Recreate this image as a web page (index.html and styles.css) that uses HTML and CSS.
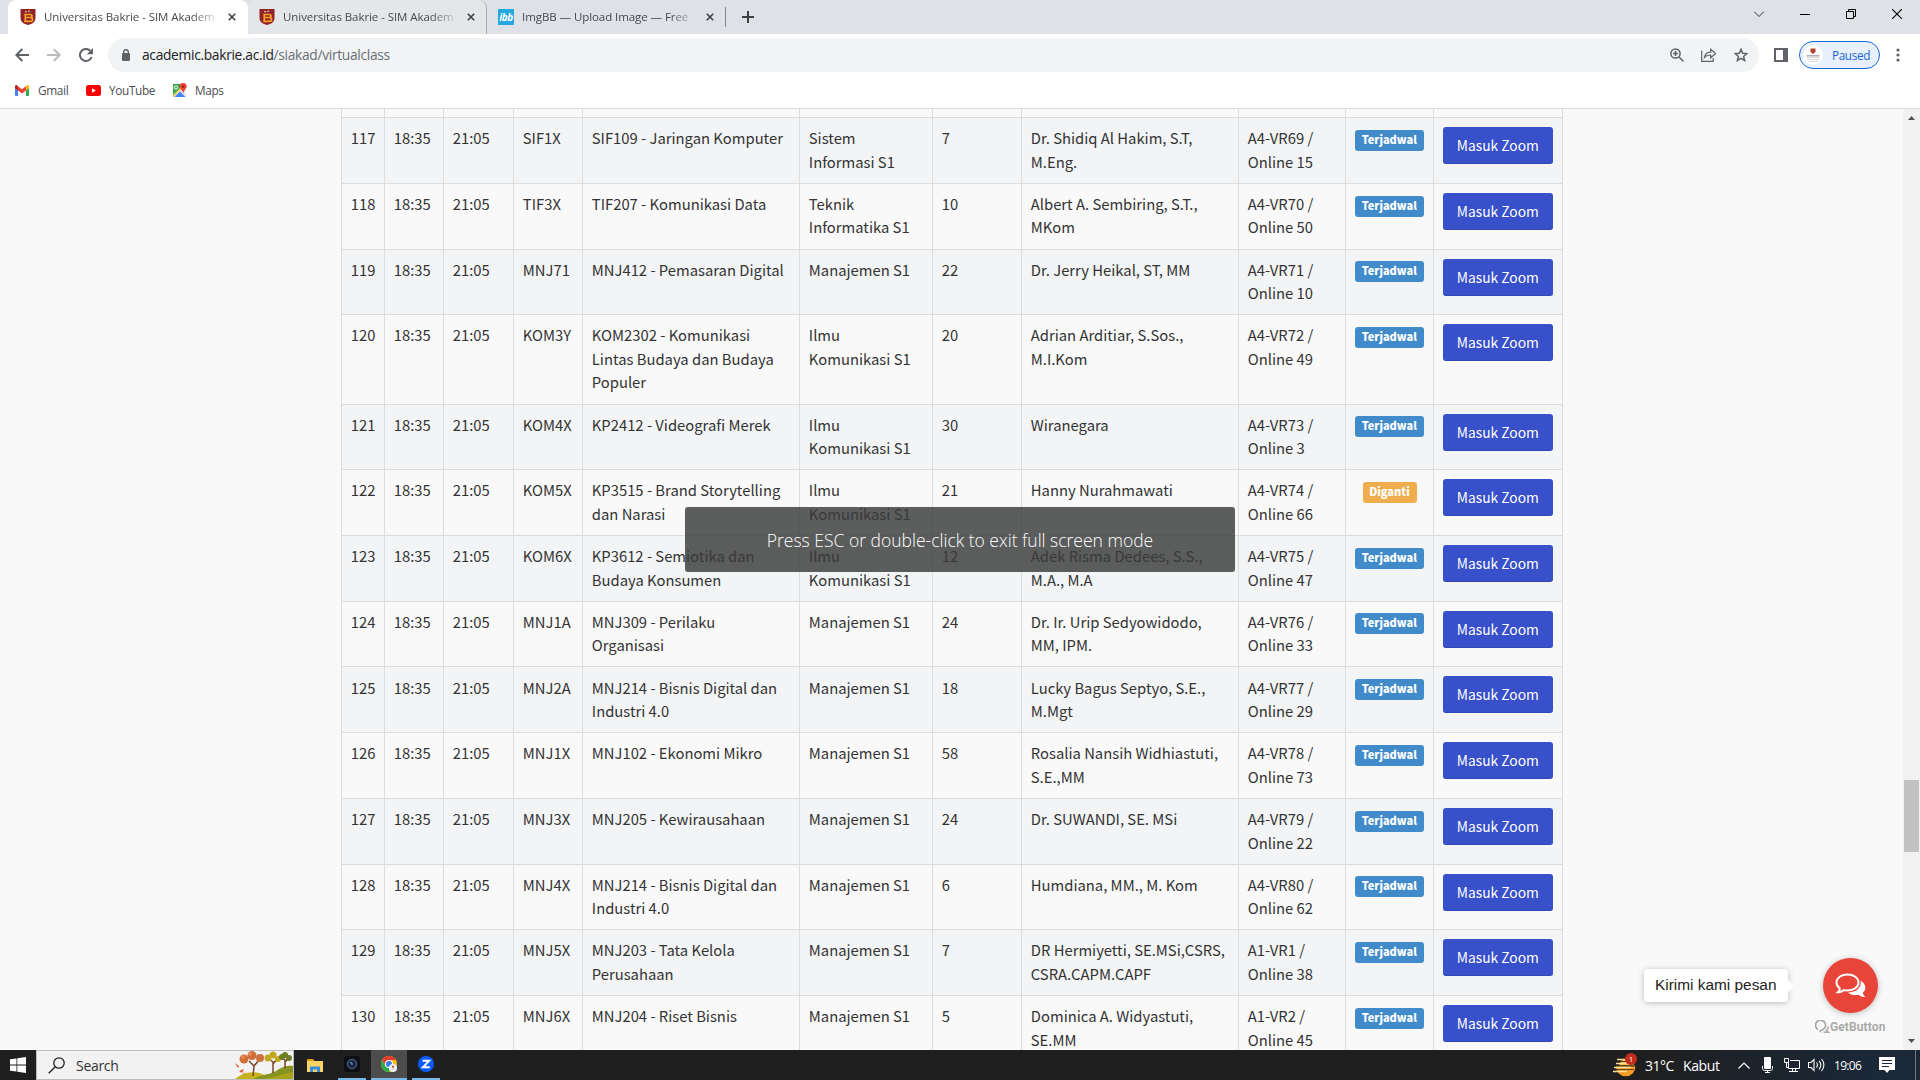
FILE: index.html
```html
<!DOCTYPE html>
<html lang="id">
<head>
    <meta charset="UTF-8">
    <meta name="viewport" content="width=device-width, initial-scale=1.0">
    <title>Universitas Bakrie - SIM Akademik</title>
    <link rel="stylesheet" href="styles.css">
</head>
<body>
  <!-- shared icons -->
  <svg class="defs" width="0" height="0">
    <symbol id="shield" viewBox="0 0 16 16">
      <path d="M0.5 0h15v9c0 4-3.500 6-7.500 7C4 15 0.500 13 0.500 9z" fill="#8f2326"/>
      <path d="M4.200 5.500h6c2.400 0 2.400 3 0 3h-4M4.200 12.300h6.300c2.800 0 2.800-3.800 0-3.800M5.300 5.500v6.800" fill="none" stroke="#f5a12c" stroke-width="1.700"/>
      <path d="M5 3.200l1-.9 1 .9M8 2.800l1.200-1 1 1" fill="none" stroke="#f6d9b0" stroke-width="1"/>
    </symbol>
    <symbol id="close" viewBox="0 0 8 8">
      <path d="M0.800 0.800l6.400 6.400M7.200 0.800l-6.400 6.400" stroke="#3c4043" stroke-width="1.600" fill="none"/>
    </symbol>
  </svg>

  <header class="browser">
    <div class="tabs">
      <div class="tab active">
        <svg class="favicon" width="16" height="16"><use href="#shield"/></svg>
        <span class="tab-title">Universitas Bakrie - SIM Akadem</span>
        <svg class="tab-close" width="8" height="8"><use href="#close"/></svg>
      </div>
      <div class="tab hover">
        <svg class="favicon" width="16" height="16"><use href="#shield"/></svg>
        <span class="tab-title">Universitas Bakrie - SIM Akadem</span>
        <svg class="tab-close" width="8" height="8"><use href="#close"/></svg>
      </div>
      <div class="tab last">
        <span class="favicon ibb">ibb</span>
        <span class="tab-title">ImgBB — Upload Image — Free</span>
        <svg class="tab-close" width="8" height="8"><use href="#close"/></svg>
      </div>
      <svg class="new-tab" width="12" height="12" viewBox="0 0 12 12"><path d="M6 0v12M0 6h12" stroke="#3c4043" stroke-width="2"/></svg>
      <div class="window-buttons">
        <svg width="10" height="10" viewBox="0 0 10 10"><path d="M0 2.500l5 5 5-5" fill="none" stroke="#333"/></svg>
        <svg width="10" height="10" viewBox="0 0 10 10"><path d="M0 5.500h10" stroke="#000"/></svg>
        <svg width="10" height="10" viewBox="0 0 10 10"><path d="M.5 2.500h7v7h-7zM2.500 2.500v-2h7v7h-2" fill="none" stroke="#000"/></svg>
        <svg width="10" height="10" viewBox="0 0 10 10"><path d="M0 0l10 10M10 0L0 10" stroke="#000" stroke-width="1.100"/></svg>
      </div>
    </div>

    <div class="toolbar">
      <div class="nav">
        <svg width="14" height="14" viewBox="0 0 14 14"><path d="M14 7H1.500M7.300 1L1.300 7l6 6" fill="none" stroke="#5f6368" stroke-width="2"/></svg>
        <svg width="14" height="14" viewBox="0 0 14 14"><path d="M0 7h12.500M6.700 1l6 6-6 6" fill="none" stroke="#babcbe" stroke-width="2"/></svg>
        <svg width="14" height="14" viewBox="0 0 14 14"><path d="M12.600 9A6 6 0 1 1 11.300 2.800" fill="none" stroke="#5f6368" stroke-width="2"/><path d="M14 0v6.200H7.800z" fill="#5f6368"/></svg>
      </div>
      <div class="address">
        <svg width="8" height="12" viewBox="0 0 8 12"><path d="M1.700 5V3a2.300 2.300 0 0 1 4.600 0v2" fill="none" stroke="#5f6368" stroke-width="1.400"/><rect y="4" width="8" height="8" rx="1" fill="#5f6368"/></svg>
        <span class="url">academic.bakrie.ac.id<span>/siakad/virtualclass</span></span>
        <div class="address-icons">
          <svg width="14" height="14" viewBox="0 0 14 14"><g fill="none" stroke="#5f6368" stroke-width="1.500"><circle cx="5.500" cy="5.500" r="4.600"/><path d="M8.800 8.800l4.700 4.700M3 5.500h5M5.500 3v5"/></g></svg>
          <svg width="16" height="14" viewBox="0 0 16 14"><g fill="none" stroke="#5f6368" stroke-width="1.200"><path d="M.7 2.500v10.800h11.500V10"/><path d="M3.500 9.500c.5-3.500 3-5.300 6.200-5.300V1.200L14.500 5.500 9.700 9.800V7c-3 0-4.700.6-6.200 2.500z"/></g></svg>
          <svg width="14" height="14" viewBox="0 0 14 14"><path d="M7 1.300l1.600 4 4.200.3-3.200 2.800 1 4.100L7 10.300l-3.600 2.200 1-4.100L1.200 5.600l4.200-.3z" fill="none" stroke="#5f6368" stroke-width="1.500"/></svg>
        </div>
      </div>
      <svg class="side-panel" width="14" height="14" viewBox="0 0 14 14"><path d="M0 0h14v14H0zM2 2v10h7V2z" fill="#5f6368" fill-rule="evenodd"/></svg>
      <div class="profile">
        <span class="avatar">
          <svg width="20" height="20" viewBox="0 0 20 20"><path d="M7.500 3.500h5v3.500l-2.500 2-2.500-2z" fill="#b5432a"/><path d="M3.500 10.500h13M3.500 12h13" stroke="#aaa" stroke-width=".9"/><path d="M4 14.500h12M6 16.500h8" stroke="#ccc" stroke-width=".8"/></svg>
        </span>
        <span class="paused">Paused</span>
      </div>
      <svg class="menu" width="4" height="14" viewBox="0 0 4 14" fill="#5f6368"><circle cx="2" cy="2" r="1.600"/><circle cx="2" cy="7" r="1.600"/><circle cx="2" cy="12" r="1.600"/></svg>
    </div>

    <div class="bookmarks">
      <a class="gmail">
        <svg width="14" height="11" viewBox="0 0 14 11"><path d="M0 2v8.200c0 .5.300.8.800.8H3V4z" fill="#4285f4"/><path d="M14 2v8.200c0 .5-.3.800-.8.800H11V4z" fill="#34a853"/><path d="M11 1.200V5.500l3-2.300V1.500c0-1.300-1.300-1.900-2.300-1.100z" fill="#fbbc04"/><path d="M0 1.500v1.700l3 2.300V1.200L2.300.4C1.300-.4 0 .2 0 1.500z" fill="#c5221f"/><path d="M3 1.200v4.300l4 3 4-3V1.200l-4 3z" fill="#ea4335"/></svg>
        <span>Gmail</span>
      </a>
      <a class="youtube">
        <svg width="15" height="11" viewBox="0 0 15 11"><rect width="15" height="11" rx="2.500" fill="#f00"/><path d="M6 3.200v4.600l4-2.300z" fill="#fff"/></svg>
        <span>YouTube</span>
      </a>
      <a class="maps">
        <svg width="15" height="15" viewBox="0 0 15 15"><path d="M1 1h13v13H1z" fill="#34a853"/><path d="M1 14L14 1v13z" fill="#e8eaed"/><path d="M2.500 14L8 8.500l5.500 5.500z" fill="#4285f4"/><path d="M1 14v-2l10-10h2z" fill="#fbd14b"/><circle cx="4" cy="4.500" r="1.600" fill="none" stroke="#fff"/><path d="M11 0a3.600 3.600 0 0 1 3.700 3.600C14.700 6 11.500 7 11.200 11c-.3-4-3.700-5-3.700-7.400A3.600 3.600 0 0 1 11 0z" fill="#ea4335"/><circle cx="11.100" cy="3.600" r="1.200" fill="#96190f"/></svg>
        <span>Maps</span>
      </a>
    </div>
  </header>

  <main class="page">
    <table class="schedule">
      <colgroup>
        <col class="c-no"><col class="c-start"><col class="c-end"><col class="c-class"><col class="c-course"><col class="c-prodi"><col class="c-total"><col class="c-lecturer"><col class="c-room"><col class="c-status"><col class="c-action">
      </colgroup>
      <tbody>
        <tr class="previous"><td></td><td></td><td></td><td></td><td></td><td></td><td></td><td></td><td></td><td></td><td></td></tr>
        <tr><td>117</td><td>18:35</td><td>21:05</td><td>SIF1X</td><td>SIF109 - Jaringan Komputer</td><td>Sistem Informasi S1</td><td>7</td><td>Dr. Shidiq Al Hakim, S.T, M.Eng.</td><td>A4-VR69 / Online 15</td><td><span class="label">Terjadwal</span></td><td><a class="btn">Masuk Zoom</a></td></tr>
        <tr><td>118</td><td>18:35</td><td>21:05</td><td>TIF3X</td><td>TIF207 - Komunikasi Data</td><td>Teknik Informatika S1</td><td>10</td><td>Albert A. Sembiring, S.T., MKom</td><td>A4-VR70 / Online 50</td><td><span class="label">Terjadwal</span></td><td><a class="btn">Masuk Zoom</a></td></tr>
        <tr><td>119</td><td>18:35</td><td>21:05</td><td>MNJ71</td><td>MNJ412 - Pemasaran Digital</td><td>Manajemen S1</td><td>22</td><td>Dr. Jerry Heikal, ST, MM</td><td>A4-VR71 / Online 10</td><td><span class="label">Terjadwal</span></td><td><a class="btn">Masuk Zoom</a></td></tr>
        <tr><td>120</td><td>18:35</td><td>21:05</td><td>KOM3Y</td><td>KOM2302 - Komunikasi Lintas Budaya dan Budaya Populer</td><td>Ilmu Komunikasi S1</td><td>20</td><td>Adrian Arditiar, S.Sos., M.I.Kom</td><td>A4-VR72 / Online 49</td><td><span class="label">Terjadwal</span></td><td><a class="btn">Masuk Zoom</a></td></tr>
        <tr><td>121</td><td>18:35</td><td>21:05</td><td>KOM4X</td><td>KP2412 - Videografi Merek</td><td>Ilmu Komunikasi S1</td><td>30</td><td>Wiranegara</td><td>A4-VR73 / Online 3</td><td><span class="label">Terjadwal</span></td><td><a class="btn">Masuk Zoom</a></td></tr>
        <tr><td>122</td><td>18:35</td><td>21:05</td><td>KOM5X</td><td>KP3515 - Brand Storytelling dan Narasi</td><td>Ilmu Komunikasi S1</td><td>21</td><td>Hanny Nurahmawati</td><td>A4-VR74 / Online 66</td><td><span class="label warning">Diganti</span></td><td><a class="btn">Masuk Zoom</a></td></tr>
        <tr><td>123</td><td>18:35</td><td>21:05</td><td>KOM6X</td><td>KP3612 - Semiotika dan Budaya Konsumen</td><td>Ilmu Komunikasi S1</td><td>12</td><td>Adek Risma Dedees, S.S., M.A., M.A</td><td>A4-VR75 / Online 47</td><td><span class="label">Terjadwal</span></td><td><a class="btn">Masuk Zoom</a></td></tr>
        <tr><td>124</td><td>18:35</td><td>21:05</td><td>MNJ1A</td><td>MNJ309 - Perilaku Organisasi</td><td>Manajemen S1</td><td>24</td><td>Dr. Ir. Urip Sedyowidodo, MM, IPM.</td><td>A4-VR76 / Online 33</td><td><span class="label">Terjadwal</span></td><td><a class="btn">Masuk Zoom</a></td></tr>
        <tr><td>125</td><td>18:35</td><td>21:05</td><td>MNJ2A</td><td>MNJ214 - Bisnis Digital dan Industri 4.0</td><td>Manajemen S1</td><td>18</td><td>Lucky Bagus Septyo, S.E., M.Mgt</td><td>A4-VR77 / Online 29</td><td><span class="label">Terjadwal</span></td><td><a class="btn">Masuk Zoom</a></td></tr>
        <tr><td>126</td><td>18:35</td><td>21:05</td><td>MNJ1X</td><td>MNJ102 - Ekonomi Mikro</td><td>Manajemen S1</td><td>58</td><td>Rosalia Nansih Widhiastuti, S.E.,MM</td><td>A4-VR78 / Online 73</td><td><span class="label">Terjadwal</span></td><td><a class="btn">Masuk Zoom</a></td></tr>
        <tr><td>127</td><td>18:35</td><td>21:05</td><td>MNJ3X</td><td>MNJ205 - Kewirausahaan</td><td>Manajemen S1</td><td>24</td><td>Dr. SUWANDI, SE. MSi</td><td>A4-VR79 / Online 22</td><td><span class="label">Terjadwal</span></td><td><a class="btn">Masuk Zoom</a></td></tr>
        <tr><td>128</td><td>18:35</td><td>21:05</td><td>MNJ4X</td><td>MNJ214 - Bisnis Digital dan Industri 4.0</td><td>Manajemen S1</td><td>6</td><td>Humdiana, MM., M. Kom</td><td>A4-VR80 / Online 62</td><td><span class="label">Terjadwal</span></td><td><a class="btn">Masuk Zoom</a></td></tr>
        <tr><td>129</td><td>18:35</td><td>21:05</td><td>MNJ5X</td><td>MNJ203 - Tata Kelola Perusahaan</td><td>Manajemen S1</td><td>7</td><td>DR Hermiyetti, SE.MSi,CSRS, CSRA.CAPM.CAPF</td><td>A1-VR1 / Online 38</td><td><span class="label">Terjadwal</span></td><td><a class="btn">Masuk Zoom</a></td></tr>
        <tr><td>130</td><td>18:35</td><td>21:05</td><td>MNJ6X</td><td>MNJ204 - Riset Bisnis</td><td>Manajemen S1</td><td>5</td><td>Dominica A. Widyastuti, SE.MM</td><td>A1-VR2 / Online 45</td><td><span class="label">Terjadwal</span></td><td><a class="btn">Masuk Zoom</a></td></tr>
      </tbody>
    </table>

    <div class="scrollbar">
      <svg width="7" height="4" viewBox="0 0 7 4"><path d="M0 4L3.500 0 7 4z" fill="#505050"/></svg>
      <div class="track"><div class="thumb"></div></div>
      <svg width="7" height="4" viewBox="0 0 7 4"><path d="M0 0L3.500 4 7 0z" fill="#505050"/></svg>
    </div>

    <div class="chat">
      <div class="bubble">Kirimi kami pesan</div>
      <div class="chat-side">
        <div class="chat-button">
          <svg width="32" height="26" viewBox="0 0 32 26"><path d="M25.500 7.500c6 3.500 6 9.500 2.300 12.300.2 1.800 1.200 3 2.500 4.300-2.800.1-4.800-.9-6.500-2.400-4 .8-8 .2-10.800-2.300 8.500 0 14-5 12.500-11.900z" fill="#fff"/><path d="M12.500 1.500c6.200 0 11 3.400 11 8s-4.800 8-11 8c-1.300 0-2.500-.1-3.600-.4C7.300 18.300 5.200 19.200 3 19.200c1.100-1 1.700-2.200 1.800-3.800-2-1.500-3.300-3.600-3.300-5.900 0-4.600 4.800-8 11-8z" fill="#e8443a" stroke="#fff" stroke-width="2"/></svg>
        </div>
        <div class="getbutton">
          <svg width="15" height="13" viewBox="0 0 15 13"><path d="M3 9.500a5 5 0 1 1 3.500.6L4.500 11.800" fill="none" stroke="#a9a9a9" stroke-width="1.800"/><path d="M12.800 6.500c.4 1.800-.1 3.200-1.300 4l2 1.700H8.500" fill="none" stroke="#a9a9a9" stroke-width="1.600"/></svg>
          <span>GetButton</span>
        </div>
      </div>
    </div>
  </main>

  <div class="esc-message">Press ESC or double-click to exit full screen mode</div>

  <footer class="taskbar">
    <div class="start">
      <svg width="16" height="16" viewBox="0 0 16 16"><path d="M0 2.300L6.500 1.400v6.200H0zM7.300 1.300L16 0v7.600H7.300zM0 8.400h6.500v6.200L0 13.700zM7.300 8.400H16V16l-8.700-1.300z" fill="#fff"/></svg>
    </div>
    <div class="search">
      <svg width="17" height="17" viewBox="0 0 17 17"><circle cx="11" cy="6" r="5.200" fill="none" stroke="#222" stroke-width="1.300"/><path d="M7.300 9.700L.7 16.300" stroke="#222" stroke-width="1.400"/></svg>
      <span>Search</span>
      <svg class="trees" width="58" height="28" viewBox="0 0 58 28">
        <path d="M0 28C8 21 18 19 30 24l4 4z" fill="#c7b21c"/>
        <path d="M18 28c10-5 18-4 26-10 5-3 10-4 14-3v13z" fill="#86931f"/>
        <path d="M26 28c12-1 20-5 32-7v7z" fill="#a9a31c"/>
        <path d="M18 25l1-10-5-5M19 15l5-6M38 22V11l-4-3M38 13l4-5M50 17v-8l-3-2M50 11l3-3" fill="none" stroke="#7b4426" stroke-width="1.500"/>
        <g fill="#cf6f3c"><circle cx="9" cy="8" r="4.500"/><circle cx="17" cy="4.500" r="4.500"/><circle cx="25" cy="7" r="4"/></g>
        <g fill="#e08a4d"><circle cx="15" cy="3" r="2"/><circle cx="8" cy="6" r="2"/></g>
        <g fill="#c2a81f"><circle cx="33" cy="7" r="3.500"/><circle cx="38" cy="4" r="3.500"/><circle cx="43" cy="8" r="3"/></g>
        <g fill="#6f7d27"><circle cx="47" cy="6" r="3"/><circle cx="50" cy="4" r="3"/><circle cx="54" cy="7" r="3"/></g>
        <path d="M0 12l4 3-1 2zM4 20l5-2-2 4zM8 23l2-2-1 3z" fill="#e2572b"/>
      </svg>
    </div>
    <div class="task folder">
      <svg width="16" height="15" viewBox="0 0 16 15"><path d="M0 1h6l1.500 2H0z" fill="#e39a0c"/><path d="M0 3h16v11H0z" fill="#fdd366"/><path d="M3 14V8.500h10V14h-3v-2.500H6V14z" fill="#3a8fdb"/></svg>
    </div>
    <div class="task camera">
      <svg width="16" height="16" viewBox="0 0 16 16"><rect width="16" height="16" rx="2" fill="#0d0f16"/><circle cx="8" cy="8" r="4.800" fill="#263053" stroke="#56658f"/><circle cx="8" cy="8" r="2.300" fill="#3c4f9e" stroke="#0a0c14"/><circle cx="7" cy="6.700" r=".8" fill="#6fc9cf"/></svg>
    </div>
    <div class="task chrome">
      <svg width="16" height="16" viewBox="0 0 16 16"><circle cx="8" cy="8" r="8" fill="#fbc116"/><path d="M1.070 4A8 8 0 0 1 14.930 4H8L5 10z" fill="#e33b2e"/><path d="M1.070 4A8 8 0 0 0 8 16l3.500-6H4.500z" fill="#2da94f"/><circle cx="8" cy="8" r="4" fill="#fff"/><circle cx="8" cy="8" r="3.100" fill="#3a7cec"/><circle cx="12" cy="12" r="4" fill="#f3f0ee"/><path d="M11 9.800h2v1.500l-1 1-1-1zM10 13.300h4" fill="#b5432a" stroke="#bbb" stroke-width=".4"/></svg>
    </div>
    <div class="task zoom">
      <svg width="16" height="16" viewBox="0 0 16 16"><circle cx="8" cy="8" r="8" fill="#0b5cff"/><path d="M4.500 4.700h6.700L5 11.300h6.800" fill="none" stroke="#fff" stroke-width="2"/></svg>
    </div>
    <div class="tray">
      <div class="weather">
        <svg width="24" height="24" viewBox="0 0 24 24"><path d="M3 13.500h19.500a9.700 9.700 0 0 1-19.500 0z" fill="#f59a23"/><path d="M6 13a8 8 0 0 1 10-7l6 7z" fill="#f8b13c"/><path d="M4 6.500h8M3 10.500h12M1 14.500h17M0 18.500h14" stroke="#f6df9d" stroke-width="1.700"/><path d="M4 8.500h16M3 12.500h18M4 16.500h17" stroke="#3b2c1b" stroke-width=".8"/><circle cx="18" cy="6" r="6" fill="#c42b1c"/></svg>
        <span class="count">1</span>
      </div>
      <span class="temp">31°C</span>
      <span class="sky">Kabut</span>
      <svg class="chevron" width="12" height="7" viewBox="0 0 12 7"><path d="M.5 6.500L6 1l5.500 5.500" fill="none" stroke="#fff" stroke-width="1.200"/></svg>
      <svg class="mic" width="11" height="16" viewBox="0 0 11 16"><rect x="2" width="7" height="12" rx="1" fill="#fff"/><path d="M.5 9v2.500c0 1 .8 2 2 2h6c1.200 0 2-1 2-2V9M5.500 13.500v2M3 15.500h5" fill="none" stroke="#fff"/></svg>
      <svg class="net" width="16" height="14" viewBox="0 0 16 14"><path d="M6 2.500h9.500v8H4.500V5M8.500 10.500v3M11.500 10.500v3M5 13.500h9M.5.500h4v4h-4zM2.500 4.500v5h2" fill="none" stroke="#fff"/></svg>
      <svg class="volume" width="17" height="14" viewBox="0 0 17 14"><path d="M.5 4.500h2.500l3-3v11l-3-3H.5zM8.500 4.500c1.200 1.500 1.200 3.500 0 5M11 2.800c2.200 2.500 2.200 6 0 8.500M13.500 1c3.200 3.500 3.200 8.500 0 12" fill="none" stroke="#fff" stroke-width="1.100"/></svg>
      <span class="clock">19:06</span>
      <svg class="notice" width="16" height="16" viewBox="0 0 16 16"><path d="M0 0h16v13h-5.500L8 16l-2.500-3H0z" fill="#fff"/><path d="M3 3.500h10M3 6.500h10M3 9.500h7" stroke="#1c2733"/></svg>
      <div class="desktop"></div>
    </div>
  </footer>
</body>
</html>
```
FILE: styles.css
```css
*{
    margin: 0;
    padding: 0;
    box-sizing: border-box;
}
body{
    width: 1920px;
    height: 1080px;
    overflow: hidden;
    display: flex;
    flex-direction: column;
    background-color: #f9f9f9;
    font-family: "Open Sans", "Noto Sans", sans-serif;
    position: relative;
}
svg{
    display: block;
    flex-shrink: 0;
}
.defs{
    position: absolute;
}

/* browser */
.browser{
    height: 109px;
    flex-shrink: 0;
    background-color: #fff;
    border-bottom: 1px solid #dcdcdc;
}
.tabs{
    height: 34px;
    padding-left: 8px;
    background-color: #dee1e6;
    display: flex;
}
.tab{
    width: 239px;
    height: 34px;
    padding-left: 12px;
    display: flex;
    align-items: center;
    font-size: 11.5px;
    color: #45494d;
}
.tab.active{
    width: 240px;
    background-color: #fff;
    border-radius: 8px 8px 0 0;
}
.tab.hover{
    padding-left: 11px;
    background-color: #e5e6ea;
    border-radius: 8px 8px 0 8px;
    border-right: 1px solid #a9acb1;
}
.tab.last{
    height: 20px;
    margin-top: 7px;
    padding-left: 11px;
    border-right: 1px solid #85888d;
}
.favicon{
    width: 16px;
    height: 16px;
    flex-shrink: 0;
}
.ibb{
    background-color: #25a7e0;
    color: #fff;
    font-size: 10px;
    font-weight: 700;
    font-style: italic;
    line-height: 16px;
    text-align: center;
    letter-spacing: -0.5px;
}
.tab-title{
    width: 173px;
    margin-left: 8px;
    padding-bottom: 1px;
    letter-spacing: -0.07px;
    white-space: nowrap;
    -webkit-mask-image: linear-gradient(to right, #000 148px, transparent 176px);
    mask-image: linear-gradient(to right, #000 148px, transparent 176px);
}
.tab-close{
    margin-left: 11px;
}
.new-tab{
    margin: 11px 0 0 16px;
}
.window-buttons{
    margin: 9px 18px 0 auto;
    display: flex;
    gap: 36px;
}
.toolbar{
    height: 38px;
    padding-top: 4px;
    display: flex;
    align-items: center;
}
.nav{
    width: 108px;
    padding-left: 15px;
    display: flex;
    gap: 18px;
}
.address{
    width: 1651px;
    height: 34px;
    padding: 0 11px 0 14px;
    border-radius: 17px;
    background-color: #f1f3f4;
    display: flex;
    align-items: center;
}
.url{
    margin-left: 12px;
    padding-bottom: 1px;
    font-size: 13.8px;
    letter-spacing: -0.32px;
    color: #202124;
}
.url span{
    color: #6b6f74;
}
.address-icons{
    margin-left: auto;
    display: flex;
    gap: 17px;
}
.side-panel{
    margin-left: 15px;
}
.profile{
    width: 81px;
    height: 28px;
    margin-left: 11px;
    padding-left: 3px;
    border: 1px solid #1967d2;
    border-radius: 14px;
    background-color: #e8f0fe;
    display: flex;
    align-items: center;
}
.avatar{
    width: 20px;
    height: 20px;
    border-radius: 50%;
    background-color: #fff;
}
.paused{
    margin-left: 9px;
    padding-bottom: 1px;
    font-size: 11.8px;
    letter-spacing: -0.4px;
    color: #1967d2;
}
.menu{
    margin-left: 16px;
}
.bookmarks{
    height: 36px;
    padding-left: 15px;
    display: flex;
    font-size: 11.8px;
    letter-spacing: -0.35px;
    color: #4a4e52;
}
.bookmarks a{
    display: flex;
    align-items: center;
}
.bookmarks span{
    padding-bottom: 1px;
}
.gmail{
    width: 71px;
    gap: 9px;
}
.youtube{
    width: 86px;
    gap: 8px;
}
.maps{
    gap: 8px;
}

/* page */
.page{
    height: 941px;
    flex-shrink: 0;
    overflow: hidden;
    padding-left: 341px;
    position: relative;
}
.schedule{
    width: 1222px;
    table-layout: fixed;
    border-collapse: collapse;
    font-family: "Noto Sans CJK SC", "Noto Sans", sans-serif;
    font-size: 14.8px;
    line-height: 23.57px;
    color: #333;
}
.schedule td{
    padding: 8.1px 8.8px 9.5px;
    border: 1px solid #dcdcdc;
    vertical-align: top;
}
.schedule tr:nth-child(even){
    background-color: #f2f4f5;
}
.schedule .previous td{
    height: 8.6px;
    padding: 0;
    border-top: none;
}
.c-no{ width: 43px; }
.c-start{ width: 59px; }
.c-end{ width: 70px; }
.c-class{ width: 69px; }
.c-course{ width: 217px; }
.c-prodi{ width: 133px; }
.c-total{ width: 89px; }
.c-lecturer{ width: 217px; }
.c-room{ width: 107px; }
.c-status{ width: 88px; }
.c-action{ width: 129px; }
.label{
    display: block;
    width: 69px;
    height: 21px;
    margin-top: 3.6px;
    border-radius: 3px;
    background-color: #428bca;
    color: #fff;
    font-size: 11px;
    font-weight: 900;
    line-height: 19px;
    text-align: center;
}
.label.warning{
    width: 54px;
    margin-left: auto;
    margin-right: auto;
    background-color: #f0ad4e;
}
.btn{
    display: block;
    width: 110px;
    height: 37px;
    margin-top: 0.9px;
    border-radius: 3px;
    border-bottom: 1px solid #3247b5;
    background-color: #3850c9;
    color: #fff;
    font-size: 13.8px;
    font-weight: 400;
    line-height: 37px;
    text-align: center;
}
.scrollbar{
    position: absolute;
    top: 0;
    right: 0;
    width: 17px;
    height: 941px;
    padding: 7px 0;
    background-color: #f1f1f1;
    display: flex;
    flex-direction: column;
    align-items: center;
}
.track{
    flex: 1;
    width: 17px;
    padding: 660px 1px 0;
}
.thumb{
    height: 72px;
    background-color: #c1c1c1;
}

/* chat widget */
.chat{
    position: absolute;
    right: 33px;
    bottom: 17px;
    display: flex;
}
.bubble{
    width: 144px;
    height: 33px;
    margin: 11px 26px 0 0;
    padding-left: 11px;
    border-radius: 4px;
    background-color: #fff;
    box-shadow: 0 1px 6px rgba(0, 0, 0, 0.25);
    font-family: "Liberation Sans", Arial, sans-serif;
    font-size: 15.4px;
    line-height: 32px;
    color: #222;
    position: relative;
}
.bubble::after{
    content: "";
    position: absolute;
    right: -6px;
    top: 11px;
    border: 6px solid transparent;
    border-left-color: #fff;
    border-right: none;
}
.chat-side{
    width: 73px;
}
.chat-button{
    width: 55px;
    height: 55px;
    margin-left: 9px;
    border-radius: 50%;
    background-color: #e8443a;
    box-shadow: 0 1px 6px rgba(0, 0, 0, 0.25);
    display: flex;
    align-items: center;
    justify-content: center;
}
.getbutton{
    height: 20px;
    display: flex;
    align-items: center;
    padding: 7px 0 0 1px;
    color: #a9a9a9;
    font-family: Roboto, sans-serif;
    font-size: 12px;
    font-weight: 700;
    letter-spacing: 0.1px;
}

/* full screen hint */
.esc-message{
    position: absolute;
    left: 685px;
    top: 507px;
    width: 550px;
    height: 65px;
    border-radius: 3px;
    background-color: rgba(57, 58, 59, 0.82);
    color: #fff;
    font-size: 17.5px;
    font-weight: 300;
    line-height: 67px;
    letter-spacing: 0;
    text-align: center;
}

/* taskbar */
.taskbar{
    height: 30px;
    background: linear-gradient(to right, #1f1f1f 1640px, #1a2838 1880px);
    display: flex;
}
.start{
    width: 36px;
    padding: 7px 10px;
}
.search{
    width: 258px;
    border: 1px solid #bdbdbd;
    background-color: #f2f2f2;
    padding-left: 11px;
    display: flex;
    align-items: center;
    font-size: 14px;
    letter-spacing: -0.3px;
    color: #333;
}
.search span{
    margin-left: 11px;
}
.trees{
    margin-left: auto;
}
.task{
    width: 36px;
    display: flex;
    align-items: center;
    justify-content: center;
}
.folder{
    margin-left: 3px;
}
.camera, .zoom{
    width: 28px;
    border-bottom: 2px solid #76b9ed;
}
.camera{
    margin: 0 5px;
}
.chrome{
    background-color: #4d4d4d;
    border-bottom: 2px solid #76b9ed;
}
.zoom{
    margin-left: 5px;
}
.tray{
    margin-left: auto;
    display: flex;
    align-items: center;
    color: #fff;
    font-size: 14px;
}
.weather{
    position: relative;
}
.count{
    position: absolute;
    left: 12px;
    top: 0;
    width: 12px;
    font-size: 8px;
    line-height: 12px;
    text-align: center;
}
.temp{
    width: 38px;
    margin-left: 8px;
    letter-spacing: -0.5px;
}
.sky{
    width: 55px;
    letter-spacing: -0.4px;
}
.mic{
    margin-left: 12px;
}
.net{
    margin-left: 11px;
}
.volume{
    margin-left: 8px;
}
.clock{
    width: 45px;
    margin-left: 9px;
    font-size: 12px;
    letter-spacing: -0.7px;
}
.desktop{
    width: 5px;
    height: 30px;
    margin-left: 20px;
    border-left: 1px solid #6f7781;
}
```
